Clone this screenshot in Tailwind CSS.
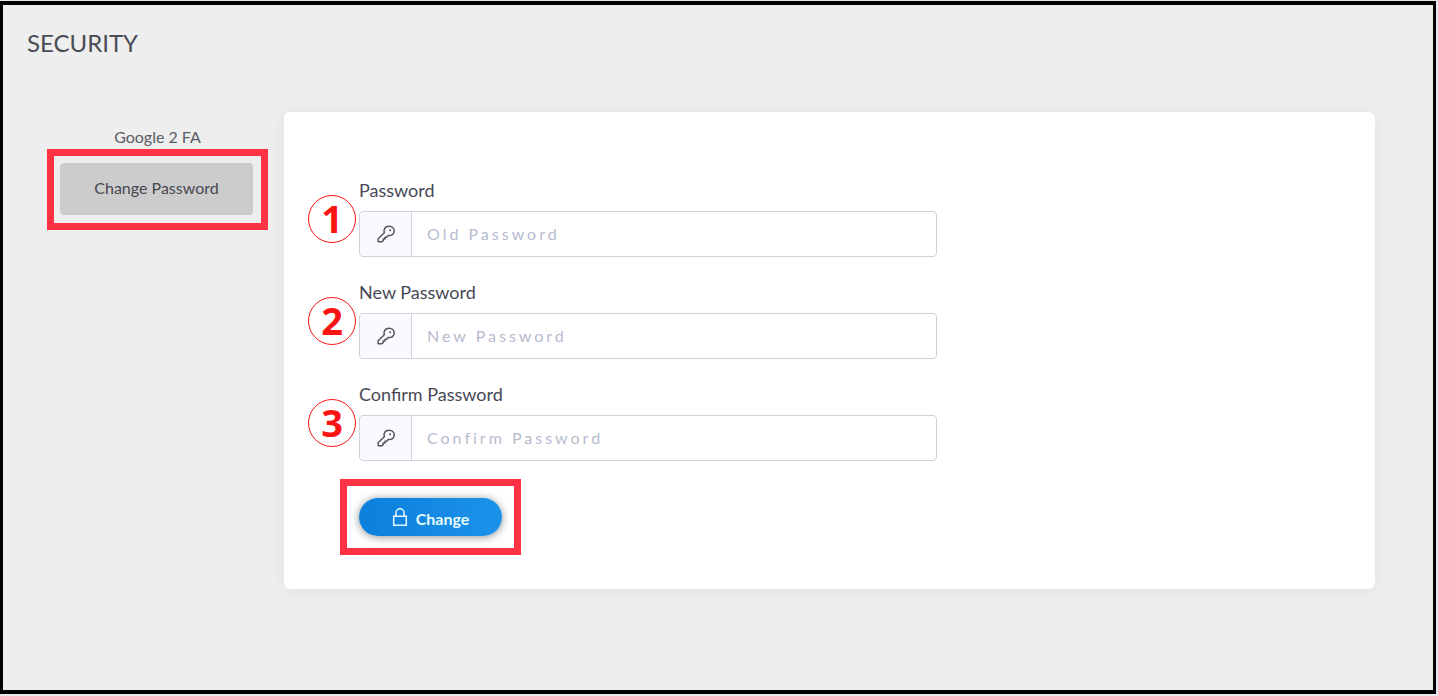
<!DOCTYPE html>
<html lang="en">
<head>
  <meta charset="UTF-8" />
  <meta name="viewport" content="width=device-width, initial-scale=1.0"/>
  <title>Security</title>
  <script src="https://cdn.jsdelivr.net/npm/@tailwindcss/browser@4"></script>
</head>
<body class="bg-[#e8e9f0] font-['Lato',sans-serif] text-[#464855]">

<div class="min-h-screen flex flex-col pt-px pr-0.5 pb-0.5">
  <div class="grow bg-[#eeeeee] border-x-3 border-y-4 border-black">

    <h1 class="pt-5 pl-6 text-2xl leading-9 text-[#4a4c55]">SECURITY</h1>

    <div class="flex items-start mt-[51px] pl-11 pr-[58px]">

      <!-- Side menu -->
      <nav class="w-[221px] shrink-0 pt-[13px] text-center">
        <a href="#google" class="block h-6 leading-6 text-[#5b5d66]">Google 2 FA</a>
        <div class="border-7 border-[#fe3244] pt-[7px] pl-1.5 pr-2 pb-2">
          <a href="#password" class="block rounded-sm bg-[#cccccc] pt-[13px] pb-[15px] leading-6 text-[#46474f]">Change Password</a>
        </div>
      </nav>

      <!-- Change password -->
      <main id="password" class="grow ml-4 rounded-md bg-white pl-[75px] pr-6 pt-[66px] pb-[34px] shadow-[0_2px_18px_rgba(0,0,0,0.06)]">
        <form class="max-w-[578px]">
          <div class="relative mb-[23px]">
            <span class="absolute -left-[51px] top-[17px] size-12 rounded-full border border-[#fb1414] flex items-center justify-center pb-0.5 font-['Open_Sans',sans-serif] font-bold text-[38px] leading-none text-[#fb1414]">1</span>
            <label for="old" class="block mb-[9px] text-lg leading-6">Password</label>
            <div class="flex h-[46px] rounded-sm border border-[#cfd2de] bg-white">
              <span class="w-[52px] shrink-0 flex items-center justify-center rounded-l-sm border-r border-[#cfd2de] bg-[#f9fafd]">
                <svg class="size-5" viewBox="0 0 20 20" fill="none" stroke="#55565c" stroke-width="1.5" stroke-linejoin="round" stroke-linecap="round">
                  <path d="M8.300 8.700C7.200 5 9.500 2.200 13 2.200c3 0 5.200 2 5.200 4.700 0 3.200-2.700 5.200-6 4.600l-1.500 1.700H9v1.700H7.200v1.700l-1.300 1.200H2.700c-.4 0-.6-.2-.6-.6v-2.400z"/>
                  <circle cx="14.100" cy="6.300" r="1" fill="#55565c" stroke="none"/>
                </svg>
              </span>
              <input id="old" type="password" placeholder="Old Password" class="grow min-w-0 px-[15px] text-base tracking-[3px] outline-none placeholder:text-[#b6bccf]">
            </div>
          </div>

          <div class="relative mb-[23px]">
            <span class="absolute -left-[51px] top-[17px] size-12 rounded-full border border-[#fb1414] flex items-center justify-center pb-0.5 font-['Open_Sans',sans-serif] font-bold text-[38px] leading-none text-[#fb1414]">2</span>
            <label for="new" class="block mb-[9px] text-lg leading-6">New Password</label>
            <div class="flex h-[46px] rounded-sm border border-[#cfd2de] bg-white">
              <span class="w-[52px] shrink-0 flex items-center justify-center rounded-l-sm border-r border-[#cfd2de] bg-[#f9fafd]">
                <svg class="size-5" viewBox="0 0 20 20" fill="none" stroke="#55565c" stroke-width="1.5" stroke-linejoin="round" stroke-linecap="round">
                  <path d="M8.300 8.700C7.200 5 9.500 2.200 13 2.200c3 0 5.200 2 5.200 4.700 0 3.200-2.700 5.200-6 4.600l-1.500 1.700H9v1.700H7.200v1.700l-1.300 1.200H2.700c-.4 0-.6-.2-.6-.6v-2.400z"/>
                  <circle cx="14.100" cy="6.300" r="1" fill="#55565c" stroke="none"/>
                </svg>
              </span>
              <input id="new" type="password" placeholder="New Password" class="grow min-w-0 px-[15px] text-base tracking-[3px] outline-none placeholder:text-[#b6bccf]">
            </div>
          </div>

          <div class="relative">
            <span class="absolute -left-[51px] top-[17px] size-12 rounded-full border border-[#fb1414] flex items-center justify-center pb-0.5 font-['Open_Sans',sans-serif] font-bold text-[38px] leading-none text-[#fb1414]">3</span>
            <label for="confirm" class="block mb-[9px] text-lg leading-6">Confirm Password</label>
            <div class="flex h-[46px] rounded-sm border border-[#cfd2de] bg-white">
              <span class="w-[52px] shrink-0 flex items-center justify-center rounded-l-sm border-r border-[#cfd2de] bg-[#f9fafd]">
                <svg class="size-5" viewBox="0 0 20 20" fill="none" stroke="#55565c" stroke-width="1.5" stroke-linejoin="round" stroke-linecap="round">
                  <path d="M8.300 8.700C7.200 5 9.500 2.200 13 2.200c3 0 5.200 2 5.200 4.700 0 3.200-2.700 5.200-6 4.600l-1.500 1.700H9v1.700H7.200v1.700l-1.300 1.200H2.700c-.4 0-.6-.2-.6-.6v-2.400z"/>
                  <circle cx="14.100" cy="6.300" r="1" fill="#55565c" stroke="none"/>
                </svg>
              </span>
              <input id="confirm" type="password" placeholder="Confirm Password" class="grow min-w-0 px-[15px] text-base tracking-[3px] outline-none placeholder:text-[#b6bccf]">
            </div>
          </div>

          <div class="mt-[18px] -ml-[19px] w-fit border-7 border-[#fe3244] px-3 py-3">
            <button type="button" class="flex h-[38px] w-[143px] items-center justify-center gap-2 rounded-full bg-linear-to-r from-[#0a80dc] to-[#1b92ea] pt-1 font-bold text-[#e6fbff] shadow-[0_1px_8px_rgba(0,0,0,0.45)]">
              <svg class="w-4 h-5 mb-1" viewBox="0 0 16 20" fill="none" stroke="currentColor" stroke-width="1.5">
                <path d="M1.700 9.300h12.600v8.900H1.700zM4 9.300V5.800a4 4 0 0 1 8 0v3.500"/>
              </svg>
              Change
            </button>
          </div>
        </form>
      </main>

    </div>
  </div>
</div>

</body>
</html>
